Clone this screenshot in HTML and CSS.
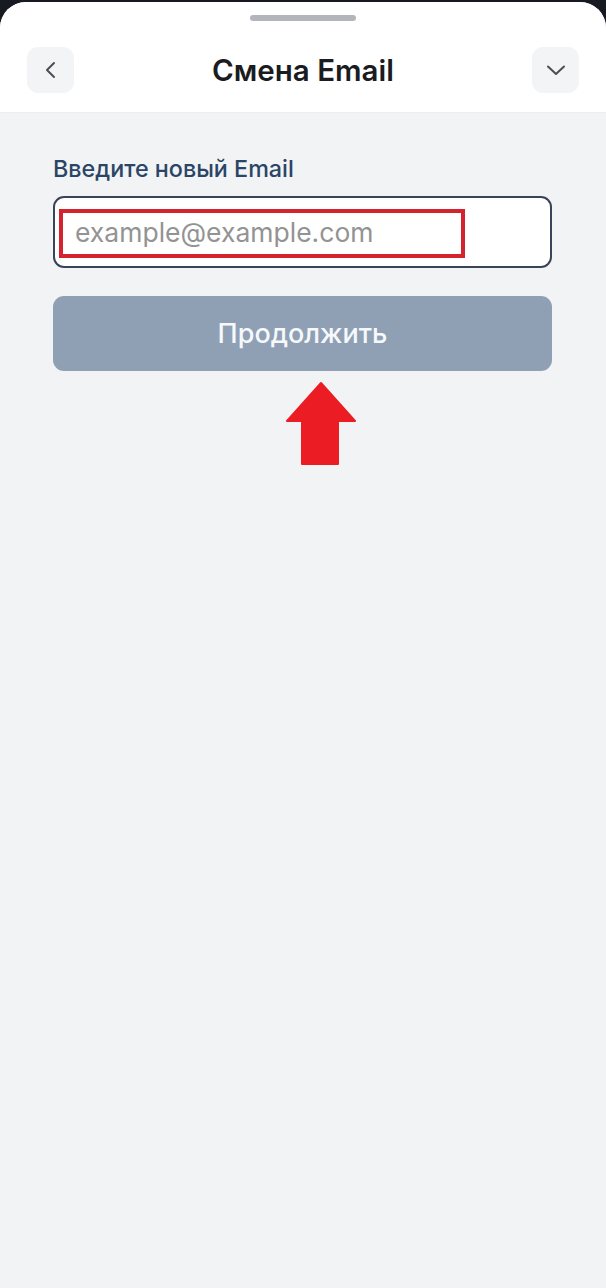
FILE: index.html
```html
<!DOCTYPE html>
<html lang="ru">
<head>
<meta charset="utf-8">
<title>Смена Email</title>
<link rel="stylesheet" href="styles.css">
</head>
<body>
<div class="screen">
  <div class="sheet">
    <header class="header">
      <div class="grabber"></div>
      <div class="bar">
        <button class="icon-btn" aria-label="Назад">
          <svg width="20" height="20" viewBox="0 0 20 20"><path d="M13 3 L6 10 L13 17" fill="none" stroke="#4b4e55" stroke-width="2" stroke-linecap="round" stroke-linejoin="round"/></svg>
        </button>
        <h1 class="title">Смена Email</h1>
        <button class="icon-btn" aria-label="Свернуть">
          <svg width="22" height="22" viewBox="0 0 22 22"><path d="M3 7.5 L11 15 L19 7.5" fill="none" stroke="#4b4e55" stroke-width="2" stroke-linecap="round" stroke-linejoin="round"/></svg>
        </button>
      </div>
    </header>
    <main class="content">
      <label class="label" for="email">Введите новый Email</label>
      <div class="input">
        <span class="placeholder">example@example.com</span>
        <div class="highlight"></div>
      </div>
      <button class="primary">Продолжить</button>
      <svg class="arrow" width="72" height="85" viewBox="0 0 72 85">
        <path d="M36 2 L70 40 L53 40 L53 83 L17 83 L17 40 L2 40 Z" fill="#ec1c24" stroke="#ec1c24" stroke-width="2" stroke-linejoin="round"/>
      </svg>
    </main>
  </div>
</div>
</body>
</html>
```
FILE: styles.css
```css
* { box-sizing: border-box; }
html, body { margin: 0; padding: 0; }
body {
  background: #171a21;
  font-family: Inter, "Noto Sans", "Liberation Sans", sans-serif;
}
.screen {
  width: 606px;
  height: 1288px;
  padding-top: 2px;
  background: #171a21;
}
.sheet {
  height: 100%;
  background: #f2f3f5;
  border-radius: 26px 26px 0 0;
  overflow: hidden;
  display: flex;
  flex-direction: column;
}
.header {
  background: #ffffff;
  padding: 13px 27px 19px;
  border-bottom: 1px solid #eceef1;
  display: flex;
  flex-direction: column;
  align-items: center;
}
.grabber {
  width: 106px;
  height: 6px;
  border-radius: 3px;
  background: #b3b5bb;
}
.bar {
  margin-top: 26px;
  width: 100%;
  display: flex;
  align-items: center;
  justify-content: space-between;
}
.icon-btn {
  width: 47px;
  height: 46px;
  border: 0;
  padding: 0;
  border-radius: 11px;
  background: #f3f4f6;
  display: flex;
  align-items: center;
  justify-content: center;
}
.title {
  margin: 0;
  font-size: 29.5px;
  font-weight: 600;
  color: #1b1c1f;
}
.content {
  position: relative;
  flex: 1;
  padding: 43px 54px 0 53px;
  display: flex;
  flex-direction: column;
}
.label {
  font-size: 23.3px;
  line-height: 26px;
  font-weight: 500;
  color: #2a4566;
}
.input {
  position: relative;
  margin-top: 14px;
  height: 72px;
  background: #ffffff;
  border: 2px solid #3a4458;
  border-radius: 11px;
  display: flex;
  align-items: center;
  padding-left: 20px;
}
.placeholder {
  font-size: 26.5px;
  color: #939393;
  font-weight: 400;
}
.highlight {
  position: absolute;
  left: 4px;
  top: 11px;
  width: 406px;
  height: 49px;
  border: 4px solid #d4232f;
}
.primary {
  margin-top: 28px;
  height: 75px;
  border: 0;
  border-radius: 11px;
  background: #8fa0b5;
  color: #f6f8fb;
  font-family: inherit;
  font-size: 27px;
  font-weight: 500;
}
.arrow {
  position: absolute;
  left: 285px;
  top: 268px;
}
```
